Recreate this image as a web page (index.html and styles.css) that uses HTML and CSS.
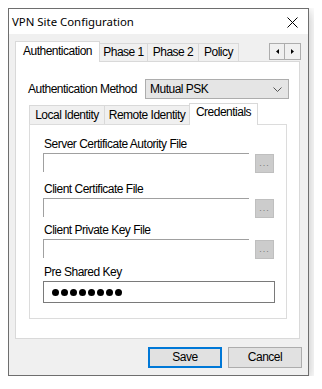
FILE: index.html
```
<!doctype html>
<html>
<head>
  <meta charset='utf-8'>
  <title>VPN Site Configuration</title>
  <link rel="stylesheet" href="styles.css">
</head>
<body>
<div class='window'>
  <div class='titlebar'>
    <span class='title'>VPN Site Configuration</span>
    <svg class='close' width='11' height='11' viewBox='0 0 11 11'><path d='M0.5 0.5L10.5 10.5M10.5 0.5L0.5 10.5' stroke='#000' stroke-width='1'/></svg>
  </div>
  <div class='client'>
    <div class='tabstrip'>
      <div class='tab tab-auth active'>Authentication</div>
      <div class='tab tab-p1'>Phase 1</div>
      <div class='tab tab-p2'>Phase 2</div>
      <div class='tab tab-policy'>Policy</div>
      <div class='scroller'>
        <span><svg width='3' height='5' viewBox='0 0 3 5'><path d='M3 0V5L0 2.5Z' fill='#000'/></svg></span>
        <span><svg width='3' height='5' viewBox='0 0 3 5'><path d='M0 0V5L3 2.5Z' fill='#000'/></svg></span>
      </div>
    </div>
    <div class='panel'>
      <div class='method-row'>
        <span class='method-label'>Authentication Method</span>
        <div class='combo'>
          <span>Mutual PSK</span>
          <svg width='9' height='5' viewBox='0 0 9 5'><path d='M0.5 0.5L4.5 4.5L8.5 0.5' stroke='#555' fill='none'/></svg>
        </div>
      </div>
      <div class='subtabs'>
        <div class='subtab st-local'>Local Identity</div>
        <div class='subtab st-remote'>Remote Identity</div>
        <div class='subtab st-cred active'>Credentials</div>
      </div>
      <div class='subpanel'>
        <div class='group g1'>
          <div class='label'>Server Certificate Autority File</div>
          <div class='file-row'><div class='file-input'></div><div class='browse'>...</div></div>
        </div>
        <div class='group g2'>
          <div class='label'>Client Certificate File</div>
          <div class='file-row'><div class='file-input'></div><div class='browse'>...</div></div>
        </div>
        <div class='group g3'>
          <div class='label'>Client Private Key File</div>
          <div class='file-row'><div class='file-input'></div><div class='browse'>...</div></div>
        </div>
        <div class='group g4'>
          <div class='label'>Pre Shared Key</div>
          <div class='psk'><i></i><i></i><i></i><i></i><i></i><i></i><i></i><i></i></div>
        </div>
      </div>
    </div>
    <div class='buttons'>
      <div class='btn default'>Save</div>
      <div class='btn'>Cancel</div>
    </div>
  </div>
</div>
</body>
</html>
```
FILE: styles.css
```
*{margin:0;padding:0;box-sizing:border-box;}
body{margin:8px;background:#fff;font-family:"Liberation Sans",Arial,sans-serif;font-size:12px;letter-spacing:-0.5px;color:#000;white-space:nowrap;}

.window{width:301px;height:368px;border:1px solid #6e6e6e;background:#f0f0f0;box-shadow:0 3px 12px rgba(0,0,0,0.28);display:flex;flex-direction:column;}

.titlebar{height:25px;background:#fff;display:flex;align-items:center;justify-content:space-between;padding:0 10px 0 3px;}
.title{font-family:"Noto Sans",sans-serif;font-size:11.4px;letter-spacing:0;line-height:16px;margin-top:1px;}
.close{display:block;margin-top:1px;}

.client{padding:7px 8px 0 6px;display:flex;flex-direction:column;}

/* outer tabs */
.tabstrip{display:flex;align-items:flex-end;height:20px;}
.tab{height:18px;border:1px solid #d9d9d9;border-bottom:none;background:#f0f0f0;margin-left:-1px;line-height:17px;text-align:center;}
.tab.active{height:21px;margin-left:0;margin-bottom:-1px;background:#fff;position:relative;z-index:2;line-height:18px;}
.tab-auth{width:85px;}
.tab-p1{width:49px;}
.tab-p2{width:52px;}
.tab-policy{width:41px;}
.scroller{display:flex;margin-left:auto;margin-right:-1px;align-self:flex-start;margin-top:2px;}
.scroller span{width:16px;height:17px;border:1px solid #adadad;background:#f0f0f0;display:flex;align-items:center;justify-content:center;}
.scroller span+span{border-left:none;}
.scroller svg{display:block;}

.panel{height:278px;border:1px solid #d9d9d9;background:#fff;padding:17px 10px 0 12px;}

.method-row{display:flex;align-items:center;justify-content:space-between;}
.combo{width:144px;height:20px;border:1px solid #adadad;background:#e5e5e5;display:flex;align-items:center;justify-content:space-between;padding:0 6px 0 4px;}
.combo svg{display:block;}

/* inner tabs */
.subtabs{display:flex;align-items:flex-end;height:20px;margin-top:5px;margin-left:1px;}
.subtab{height:19px;border:1px solid #d9d9d9;border-bottom:none;background:#f0f0f0;margin-left:-1px;line-height:18px;text-align:center;}
.subtab.active{height:22px;margin-bottom:-1px;background:#fff;position:relative;z-index:2;line-height:17px;}
.st-local{width:76px;margin-left:0;}
.st-remote{width:86px;}
.st-cred{width:69px;}

.subpanel{height:195px;width:258px;margin-left:1px;border:1px solid #dcdcdc;background:#fff;padding:13px 0 0 13px;}

.group .label{line-height:13px;padding-left:1px;}
.g2{margin-top:10px;}
.g3{margin-top:6px;}
.g4{margin-top:7px;}
.file-row{display:flex;align-items:flex-start;margin-top:2px;height:20px;}
.file-input{width:206px;height:19px;border-top:1px solid #a0a0a0;border-left:1px solid #a0a0a0;}
.browse{width:19px;height:19px;margin-left:6px;margin-top:1px;background:#cccccc;border:1px solid #bfbfbf;color:#7a7a7a;font-size:9px;text-align:center;line-height:17px;letter-spacing:1px;}

.psk{width:232px;height:22px;margin-top:2px;border:1px solid #7a7a7a;display:flex;align-items:center;gap:2px;padding-left:8px;}
.psk i{width:7px;height:7px;border-radius:50%;background:#000;}

.buttons{display:flex;justify-content:flex-end;gap:6px;margin-top:8px;margin-right:-2px;}
.btn{width:74px;height:21px;border:1px solid #adadad;background:#e1e1e1;text-align:center;line-height:19px;}
.btn.default{border:2px solid #0078d7;line-height:17px;}
```
